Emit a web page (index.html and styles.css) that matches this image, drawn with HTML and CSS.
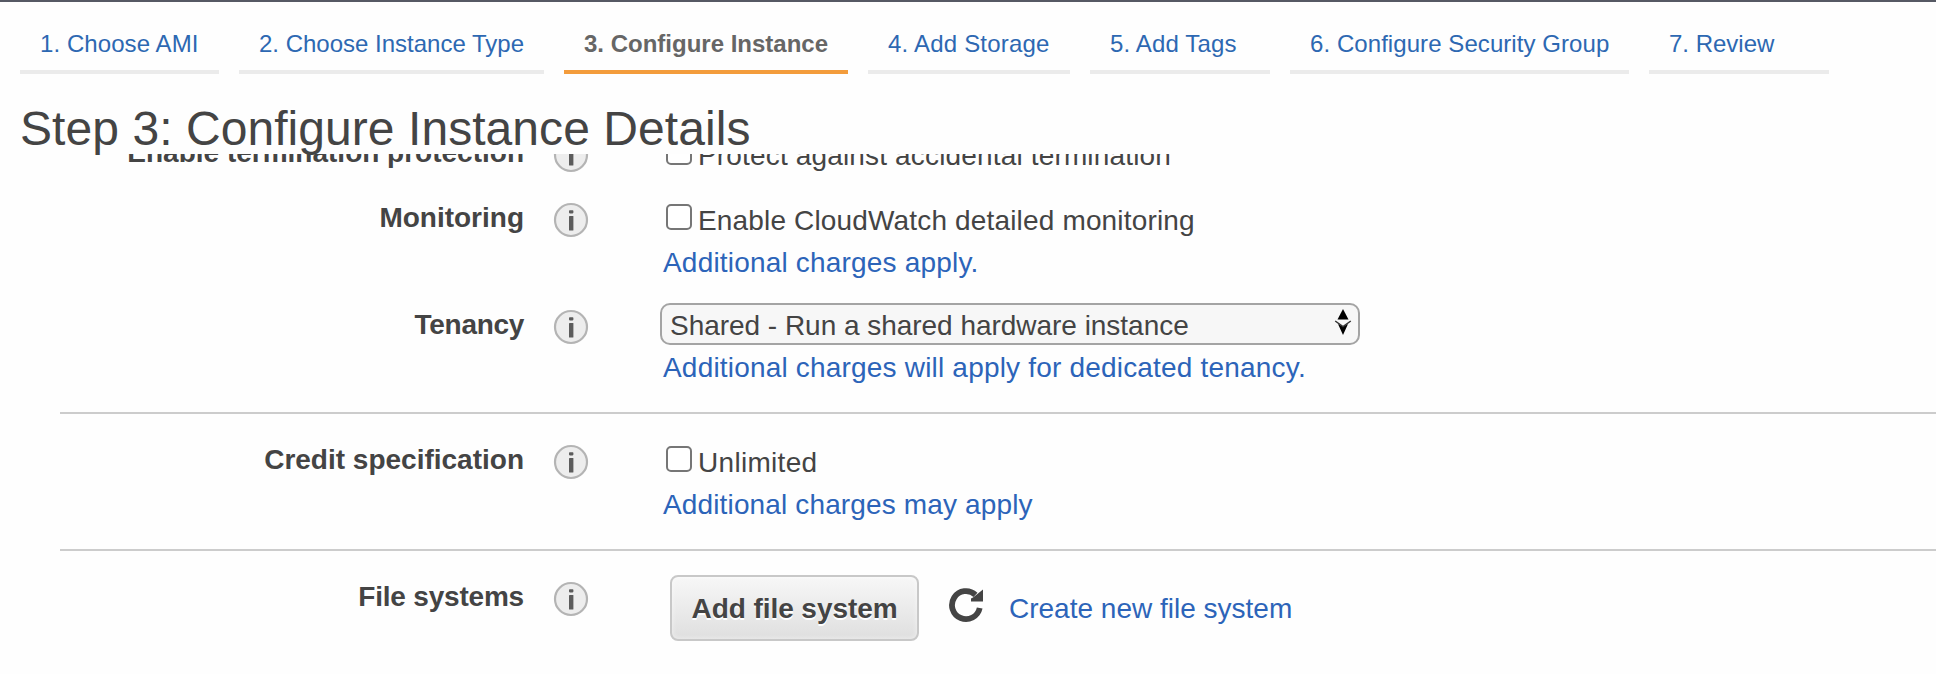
FILE: index.html
```html
<!DOCTYPE html>
<html lang="en">
<head>
<meta charset="utf-8">
<title>Step 3: Configure Instance Details</title>
<link rel="stylesheet" href="styles.css">
</head>
<body>
<svg width="0" height="0" class="defs" aria-hidden="true">
  <symbol id="info" viewBox="0 0 36 36">
    <circle cx="18" cy="18" r="16" fill="#ededed" stroke="#b4b4b4" stroke-width="2.2"/>
    <rect x="16" y="8.2" width="4.4" height="3.2" rx=".8" fill="#5c5c5c"/>
    <rect x="16" y="14" width="4.4" height="14.6" rx=".6" fill="#5c5c5c"/>
  </symbol>
</svg>
<header class="header">
  <nav class="steps">
    <a class="step step-ami">1. Choose AMI</a>
    <a class="step step-type">2. Choose Instance Type</a>
    <a class="step step-configure active">3. Configure Instance</a>
    <a class="step step-storage">4. Add Storage</a>
    <a class="step step-tags">5. Add Tags</a>
    <a class="step step-security">6. Configure Security Group</a>
    <a class="step step-review">7. Review</a>
  </nav>
  <h1 class="title">Step 3: Configure Instance Details</h1>
</header>
<main class="panel">
  <div class="form">
    <section class="row row-protection">
      <div class="label">Enable termination protection</div>
      <svg class="info"><use href="#info"/></svg>
      <div class="value">
        <label class="check"><input type="checkbox">Protect against accidental termination</label>
      </div>
    </section>
    <section class="row row-monitoring">
      <div class="label">Monitoring</div>
      <svg class="info"><use href="#info"/></svg>
      <div class="value">
        <label class="check"><input type="checkbox">Enable CloudWatch detailed monitoring</label>
        <a class="note">Additional charges apply.</a>
      </div>
    </section>
    <section class="row row-tenancy">
      <div class="label label-tenancy">Tenancy</div>
      <svg class="info"><use href="#info"/></svg>
      <div class="value">
        <div class="select">
          <span>Shared - Run a shared hardware instance</span>
          <svg class="arrows" viewBox="0 0 18 28">
            <path d="M9 1 L14.500 11.500 H3.500Z" fill="#000"/>
            <path d="M4 16 L9 18.500 L14 16 L9 27Z" fill="#000"/>
            <path d="M1.200 13 L9 18.500 L16.800 13" fill="none" stroke="#333" stroke-width="1.500"/>
          </svg>
        </div>
        <a class="note">Additional charges will apply for dedicated tenancy.</a>
      </div>
    </section>
    <section class="row row-credit">
      <div class="label">Credit specification</div>
      <svg class="info"><use href="#info"/></svg>
      <div class="value">
        <label class="check unlimited"><input type="checkbox">Unlimited</label>
        <a class="note note-may">Additional charges may apply</a>
      </div>
    </section>
    <section class="row row-files">
      <div class="label label-files">File systems</div>
      <svg class="info"><use href="#info"/></svg>
      <div class="value files">
        <button class="button">Add file system</button>
        <svg class="refresh" viewBox="0 0 36 36">
          <path d="M27.500 7.800 A14 14 0 1 0 31.700 21" fill="none" stroke="#444" stroke-width="5.800"/>
          <path d="M35 2.500 V14.500 H23 V11.500 L25 10.500Z" fill="#444"/>
        </svg>
        <a class="create">Create new file system</a>
      </div>
    </section>
  </div>
</main>
</body>
</html>
```
FILE: styles.css
```css
* {
  box-sizing: border-box;
}

body {
  margin: 0;
  height: 674px;
  overflow: hidden;
  background: #fefefe;
  color: #444;
  font: 28px/36px "Helvetica Neue", "Liberation Sans", Arial, sans-serif;
  white-space: nowrap;
}

.defs {
  display: block;
}

.header {
  height: 154px;
  border-top: 2px solid #565964;
  padding: 18px 20px 0;
}

.steps {
  display: flex;
  gap: 20px;
  height: 54px;
}

.step {
  padding: 10px 0 0 20px;
  border-bottom: 4px solid #ebebeb;
  color: #2d68b2;
  font-size: 24px;
  line-height: 28px;
}

.step-ami {
  width: 199px;
  letter-spacing: 0.08px;
}

.step-type {
  width: 305px;
}

.step-configure {
  width: 284px;
}

.step-storage {
  width: 202px;
  letter-spacing: 0.2px;
}

.step-tags,
.step-review {
  width: 180px;
}

.step-tags {
  letter-spacing: 0.15px;
}

.step-security {
  width: 339px;
  letter-spacing: 0.07px;
}

.step.active {
  border-color: #f39c3c;
  color: #666;
  font-weight: bold;
}

.title {
  position: relative;
  z-index: 1;
  margin: 25px 0 0;
  font-size: 48px;
  font-weight: normal;
  line-height: 60px;
  letter-spacing: 0.06px;
}

.panel {
  height: 520px;
  overflow: hidden;
  padding-left: 60px;
}

.form {
  margin-top: -24px;
}

.row {
  display: grid;
  grid-template-columns: 464px 36px 1fr;
  column-gap: 29px;
  align-items: start;
}

.row-protection {
  height: 65px;
}

.row-monitoring {
  height: 107px;
}

.row-tenancy {
  height: 112px;
  border-bottom: 2px solid #ccc;
}

.row-credit {
  height: 137px;
  padding-top: 23px;
  border-bottom: 2px solid #ccc;
}

.row-files {
  padding-top: 23px;
}

.label {
  padding-top: 5px;
  text-align: right;
  font-weight: bold;
}

.label-tenancy {
  letter-spacing: -0.3px;
}

.label-files {
  letter-spacing: -0.2px;
}

.info {
  width: 36px;
  height: 36px;
  margin-top: 7px;
}

.value {
  display: flex;
  flex-direction: column;
  align-items: flex-start;
  gap: 6px;
  padding: 8px 0 0 45px;
}

.check {
  display: flex;
  gap: 6px;
  padding-left: 3px;
  letter-spacing: 0.16px;
}

.unlimited {
  letter-spacing: 0.3px;
}

.check input {
  appearance: none;
  width: 26px;
  height: 26px;
  margin: 1px 0 0;
  border: 2px solid #767676;
  border-radius: 5px;
  background: #fff;
}

.note {
  color: #2c64b9;
  letter-spacing: 0.19px;
}

.note-may {
  letter-spacing: 0.14px;
}

.row-tenancy .value {
  gap: 5px;
  padding-top: 1px;
}

.select {
  display: flex;
  justify-content: space-between;
  width: 700px;
  height: 42px;
  margin-left: -3px;
  padding: 3px 6px 0 8px;
  border: 2px solid #a4a4a4;
  border-radius: 10px;
  background: #f7f7f7;
  letter-spacing: -0.03px;
}

.arrows {
  width: 18px;
  height: 28px;
}

.row-files .value {
  flex-direction: row;
  align-items: flex-start;
  gap: 0;
  padding: 1px 0 0 52px;
}

.button {
  width: 249px;
  height: 66px;
  padding: 2px 0 0;
  border: 2px solid #c8c8c8;
  border-radius: 8px;
  background: linear-gradient(#f7f7f7, #dfdfdf);
  box-shadow: inset 0 0 4px 1px rgba(255, 255, 255, 0.4);
  color: #444;
  font: bold 28px/36px "Helvetica Neue", "Liberation Sans", Arial, sans-serif;
  letter-spacing: -0.06px;
  text-shadow: 0 2px 0 #fff;
}

.refresh {
  width: 36px;
  height: 36px;
  margin: 12px 0 0 29px;
}

.create {
  margin: 16px 0 0 25px;
  color: #2c64b9;
}
```
